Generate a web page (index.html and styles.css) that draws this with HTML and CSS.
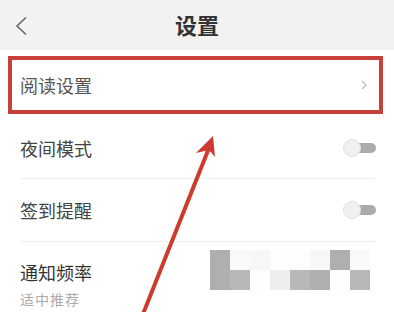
FILE: index.html
```html
<!DOCTYPE html>
<html lang="zh">
<head>
<meta charset="utf-8">
<link rel="stylesheet" href="styles.css">
</head>
<body>
<div class="page">
  <header class="header">
    <svg class="back" width="14" height="20" viewBox="0 0 14 20"><path d="M12 1.5 L3 10 L12 18.5" fill="none" stroke="#666" stroke-width="1.6"/></svg>
    <div class="title">设置</div>
  </header>
  <div class="list">
    <div class="row row-hl">
      <span class="label">阅读设置</span>
      <svg class="chev" width="6" height="10" viewBox="0 0 6 10"><path d="M1 1 L5 5 L1 9" fill="none" stroke="#bbb" stroke-width="1.2"/></svg>
    </div>
    <div class="rows">
      <div class="row row-line first">
        <span class="label">夜间模式</span>
        <span class="toggle"><span class="knob"></span></span>
      </div>
      <div class="row row-line">
        <span class="label">签到提醒</span>
        <span class="toggle"><span class="knob"></span></span>
      </div>
      <div class="row-multi">
        <div class="label">通知频率</div>
        <div class="sub">适中推荐</div>
      </div>
    </div>
  </div>
  <div class="mosaic">
    <i class="c1"></i><i class="c5"></i><i class="c4"></i><i></i><i></i><i class="c4"></i><i class="c1"></i><i class="c5"></i>
    <i class="c1"></i><i class="c2"></i><i></i><i class="c3"></i><i class="c2"></i><i class="c1"></i><i></i><i class="c2"></i>
  </div>
  <svg class="arrow" width="394" height="312" viewBox="0 0 394 312">
    <line x1="143" y1="314" x2="209" y2="148" stroke="#cc3a30" stroke-width="4"/>
    <path d="M213 136 L196 153 L209 150 L215 157 Z" fill="#cc3a30"/>
  </svg>
</div>
</body>
</html>
```

FILE: styles.css
```css
* { box-sizing: border-box; }
html, body { margin: 0; padding: 0; }
body {
  width: 394px;
  height: 312px;
  overflow: hidden;
  background: #fff;
  font-family: "Noto Sans CJK SC", "Noto Sans", sans-serif;
}
.page { position: relative; width: 394px; height: 312px; }
.header {
  height: 50px;
  background: #f2f2f2;
  display: flex;
  align-items: center;
  justify-content: center;
  position: relative;
}
.back { position: absolute; left: 14px; top: 16px; }
.title {
  font-size: 22px;
  font-weight: 700;
  color: #333;
  line-height: 26px;
  margin-top: -2px;
}
.list { padding-top: 6px; }
.row {
  display: flex;
  align-items: center;
  justify-content: space-between;
}
.label { font-size: 18px; color: #444; line-height: 24px; }
.row-hl {
  margin: 0 11px 0 8px;
  height: 58px;
  border: 4px solid #c8403a;
  padding: 0 12px 0 8px;
}
.row-hl .label { color: #555; }
.rows { padding: 0 19px 0 20px; margin-top: 4px; }
.row-line {
  height: 61px;
  border-bottom: 1px solid #eeeeee;
}
.row-line + .row-line { height: 63px; }
.toggle {
  position: relative;
  width: 33px;
  height: 18px;
  margin-right: -1px;
}
.toggle::before {
  content: "";
  position: absolute;
  left: 8px;
  right: 0;
  top: 4px;
  height: 10px;
  border-radius: 5px;
  background: #ababab;
}
.knob {
  position: absolute;
  left: 0;
  top: 0;
  width: 18px;
  height: 18px;
  border-radius: 50%;
  background: #f0f0f0;
  border: 1px solid #e2e2e2;
}
.row-multi { padding-top: 18px; }
.row-multi .label { color: #333; }
.sub { font-size: 14px; color: #aaa; line-height: 20px; margin-top: 5px; letter-spacing: 1px; }
.mosaic {
  position: absolute;
  left: 210px;
  top: 250px;
  display: grid;
  grid-template-columns: repeat(8, 20px);
  grid-auto-rows: 20px;
}
.mosaic i { display: block; background: #fdfdfd; }
.mosaic .c1 { background: #afafaf; }
.mosaic .c2 { background: #b8b8b8; }
.mosaic .c3 { background: #eeeeee; }
.mosaic .c4 { background: #f7f7f7; }
.mosaic .c5 { background: #fafafa; }
.arrow { position: absolute; left: 0; top: 0; pointer-events: none; }
```
